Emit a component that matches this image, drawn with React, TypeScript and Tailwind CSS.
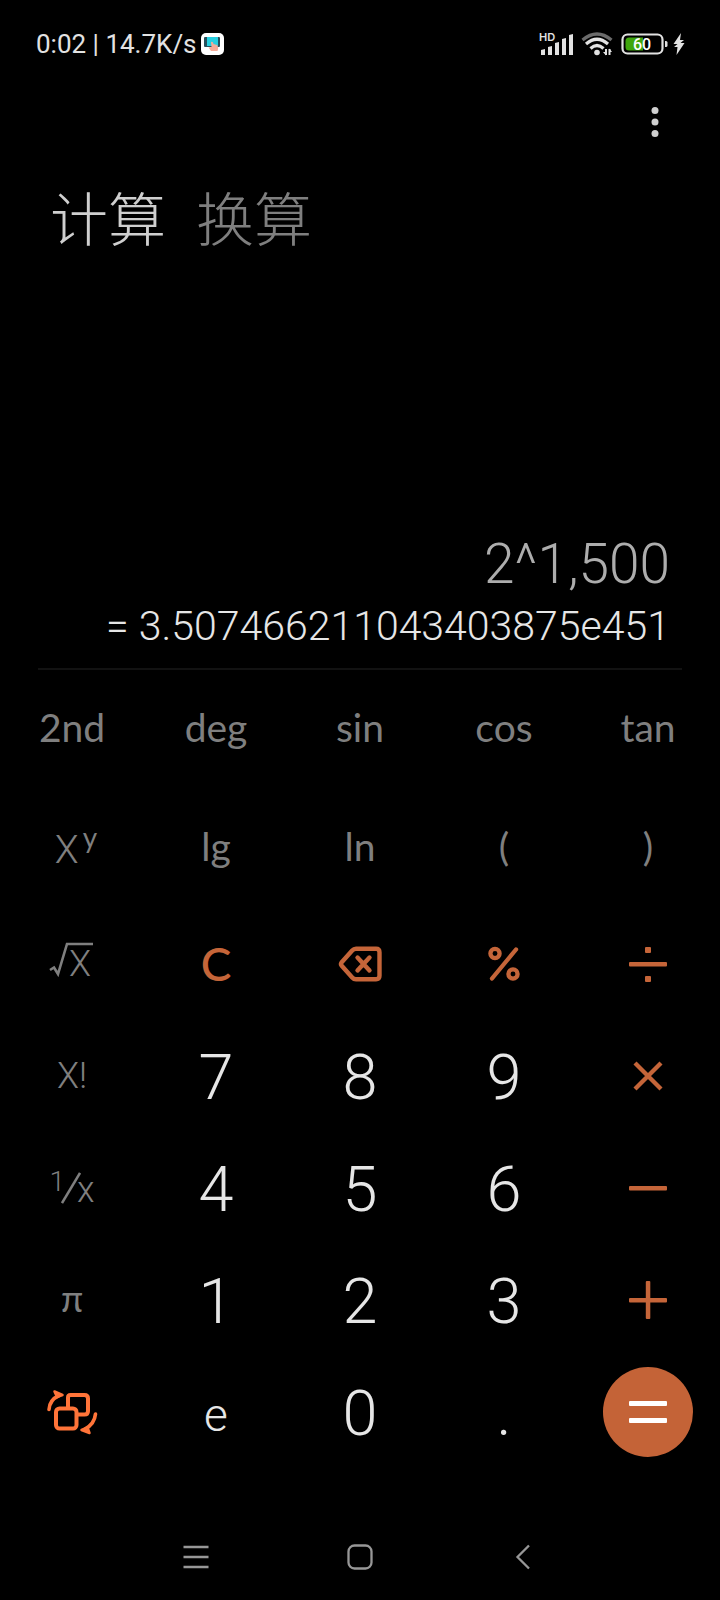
import { useState, type ReactNode } from "react";

type Tone = "fn" | "digit" | "op";

interface Key {
  id: string;
  label?: string;
  face: ReactNode;
  tone: Tone;
}

const toneClass: Record<Tone, string> = {
  fn: "pb-1 text-[#7f7f7f]",
  digit: "pt-0.5 font-['Roboto',sans-serif] font-[350] text-[#e6e6e6]",
  op: "text-[#c56539]",
};

const SqrtFace = () => (
  <svg width="46" height="50" viewBox="-1 -4 46 50" fill="none" stroke="currentColor" strokeWidth="2.600">
    <path d="M0 29 L4 26.500 L8 33 L17 3 H43" />
    <text x="19" y="35" fontSize="36" fontWeight="350" fontFamily="Roboto, sans-serif" fill="currentColor" stroke="none">
      X
    </text>
  </svg>
);

const BackspaceIcon = () => (
  <svg width="44" height="36" viewBox="0 0 44 36" fill="none" stroke="currentColor" strokeWidth="4.400" strokeLinecap="round" strokeLinejoin="round">
    <path d="M18 2.700 H38 Q41.500 2.700 41.500 6.200 V29.800 Q41.500 33.300 38 33.300 H18 Q15.800 33.300 14.200 31.500 L3.500 19.500 Q2.400 18 3.500 16.500 L14.200 4.500 Q15.800 2.700 18 2.700 Z" />
    <path strokeWidth="4.400" d="M19.500 11.500 L31.500 24.500 M31.500 11.500 L19.500 24.500" />
  </svg>
);

const PercentIcon = () => (
  <svg width="32" height="36" viewBox="0 0 32 36" fill="none" stroke="currentColor" strokeWidth="4.300" strokeLinecap="round">
    <circle cx="7" cy="7.500" r="4.600" />
    <circle cx="25" cy="28" r="4.600" />
    <path d="M28 3.500 L4 32.500" />
  </svg>
);

const DivideIcon = () => (
  <svg width="38" height="38" viewBox="0 0 38 38" fill="currentColor">
    <rect x="0" y="17" width="38" height="4.500" rx="1" />
    <rect x="16" y="2" width="6" height="6" rx="1" />
    <rect x="16" y="31" width="6" height="6" rx="1" />
  </svg>
);

const TimesIcon = () => (
  <svg width="38" height="38" viewBox="0 0 38 38" stroke="currentColor" strokeWidth="4.300">
    <path d="M6 6 L32 32 M32 6 L6 32" />
  </svg>
);

const MinusIcon = () => (
  <svg width="38" height="38" viewBox="0 0 38 38" fill="currentColor">
    <rect x="0" y="17" width="38" height="4.500" rx="1" />
  </svg>
);

const PlusIcon = () => (
  <svg width="38" height="38" viewBox="0 0 38 38" fill="currentColor">
    <rect x="0" y="17" width="38" height="4.500" rx="1" />
    <rect x="16.800" y="0" width="4.500" height="38" rx="1" />
  </svg>
);

const EqualsIcon = () => (
  <svg width="38" height="38" viewBox="0 0 38 38" fill="#fff">
    <rect x="0" y="8" width="38" height="5" rx="1" />
    <rect x="0" y="25" width="38" height="5" rx="1" />
  </svg>
);

const SwitchIcon = () => (
  <svg width="52" height="46" viewBox="0 0 52 46" fill="none" stroke="#ff7439" strokeWidth="4" strokeLinecap="round" strokeLinejoin="round">
    <path d="M22 18 V8.500 Q22 6 24.500 6 H38.500 Q42 6 42 9.500 V22 Q42 25.500 38.500 25.500 H32" />
    <rect x="10" y="19.500" width="20.500" height="20" rx="3.500" />
    <path strokeWidth="3.600" d="M3 20.500 Q3.500 11 13 6.500" />
    <path strokeWidth="2.500" fill="#ff7439" d="M8.500 2.500 L16.500 6 L11 8 Z" />
    <path strokeWidth="3.600" d="M49.500 25 Q48.500 35 39 40" />
    <path strokeWidth="2.500" fill="#ff7439" d="M43.500 44 L35.500 41 L41.500 38.500 Z" />
  </svg>
);

const keys: Key[] = [
  { id: "2nd", face: <span className="text-[39px]">2nd</span>, tone: "fn" },
  { id: "deg", face: <span className="text-[39px]">deg</span>, tone: "fn" },
  { id: "sin", face: <span className="text-[39px]">sin</span>, tone: "fn" },
  { id: "cos", face: <span className="text-[39px]">cos</span>, tone: "fn" },
  { id: "tan", face: <span className="text-[39px]">tan</span>, tone: "fn" },
  {
    id: "pow",
    label: "x to the power y",
    face: (
      <span className="flex items-start gap-1 pl-2">
        <span className="pt-2 font-['Roboto',sans-serif] text-[39px] font-[350]">X</span>
        <span className="text-[28px]">y</span>
      </span>
    ),
    tone: "fn",
  },
  { id: "lg", face: <span className="text-[39px]">lg</span>, tone: "fn" },
  { id: "ln", face: <span className="text-[39px]">ln</span>, tone: "fn" },
  { id: "(", face: <span className="text-[39px]">(</span>, tone: "fn" },
  { id: ")", face: <span className="text-[39px]">)</span>, tone: "fn" },
  { id: "sqrt", label: "square root", face: <SqrtFace />, tone: "fn" },
  { id: "C", face: <span className="text-[46px] font-medium">C</span>, tone: "op" },
  { id: "del", label: "delete", face: <BackspaceIcon />, tone: "op" },
  { id: "percent", label: "percent", face: <PercentIcon />, tone: "op" },
  { id: "divide", label: "divide", face: <DivideIcon />, tone: "op" },
  { id: "fact", label: "factorial", face: <span className="pt-1 font-['Roboto',sans-serif] text-[36px] font-[350]">X!</span>, tone: "fn" },
  { id: "7", face: <span className="text-[63px]">7</span>, tone: "digit" },
  { id: "8", face: <span className="text-[63px]">8</span>, tone: "digit" },
  { id: "9", face: <span className="text-[63px]">9</span>, tone: "digit" },
  { id: "times", label: "multiply", face: <TimesIcon />, tone: "op" },
  {
    id: "inv",
    label: "one over x",
    face: (
      <span className="flex items-center pt-1 font-['Roboto',sans-serif] font-[350]">
        <span className="pb-3 text-[28px]">1</span>
        <svg className="-ml-1" width="20" height="32" viewBox="0 0 20 32" stroke="currentColor" strokeWidth="2.500">
          <path d="M1 31 L19 1" />
        </svg>
        <span className="-ml-1 pt-1 text-[36px]">x</span>
      </span>
    ),
    tone: "fn",
  },
  { id: "4", face: <span className="text-[63px]">4</span>, tone: "digit" },
  { id: "5", face: <span className="text-[63px]">5</span>, tone: "digit" },
  { id: "6", face: <span className="text-[63px]">6</span>, tone: "digit" },
  { id: "minus", label: "minus", face: <MinusIcon />, tone: "op" },
  { id: "pi", face: <span className="text-[36px]">π</span>, tone: "fn" },
  { id: "1", face: <span className="text-[63px]">1</span>, tone: "digit" },
  { id: "2", face: <span className="text-[63px]">2</span>, tone: "digit" },
  { id: "3", face: <span className="text-[63px]">3</span>, tone: "digit" },
  { id: "plus", label: "plus", face: <PlusIcon />, tone: "op" },
  { id: "switch", label: "switch layout", face: <SwitchIcon />, tone: "op" },
  { id: "e", face: <span className="pt-1 text-[46px]">e</span>, tone: "digit" },
  { id: "0", face: <span className="text-[63px]">0</span>, tone: "digit" },
  { id: ".", face: <span className="text-[63px]">.</span>, tone: "digit" },
  {
    id: "equals",
    label: "equals",
    face: (
      <span className="flex size-[90px] items-center justify-center rounded-full bg-[#c46337]">
        <EqualsIcon />
      </span>
    ),
    tone: "op",
  },
];

function StatusBar() {
  return (
    <div className="flex h-[88px] items-center justify-between pr-[35px] pl-9 text-[#e2e2e2]">
      <div className="flex items-center gap-1">
        <span className="font-['Roboto',sans-serif] text-[26px]">0:02 | 14.7K/s</span>
        <svg width="23" height="22" viewBox="0 0 23 22">
          <rect width="23" height="22" rx="5" fill="#fff" />
          <rect x="3" y="4" width="16" height="10" rx="1" fill="#27505c" />
          <rect x="6" y="4" width="11" height="9" fill="#27cfe0" />
          <path d="M10 9 Q12 8 12.500 11 L16 12 Q18 14 16.500 18 H10 L7.500 14.500 L10.500 14 Z" fill="#f6ab98" />
        </svg>
      </div>
      <div className="flex items-center">
        <svg width="34" height="32" viewBox="0 -4 34 32" fill="currentColor">
          <text x="0" y="9" fontSize="11" fontWeight="600" fontFamily="Inter, sans-serif">
            HD
          </text>
          <path d="M2 18 L6 17 V23 H2 Z M9 15 L13 14 V23 H9 Z M16 11 L20 10 V23 H16 Z M23 7 L27 6 V23 H23 Z M30 3 L34 2 V23 H30 Z" />
        </svg>
        <svg className="ml-2" width="32" height="24" viewBox="0 0 32 24" fill="none" stroke="currentColor" strokeWidth="3.200">
          <path d="M1.500 8 Q16 -4 30.500 8" stroke="#6b6b6b" />
          <path d="M5 12 Q16 2.500 27 12" />
          <path d="M9.500 16.500 Q16 10.500 22.500 16.500" />
          <circle cx="16" cy="20.500" r="2.800" fill="currentColor" stroke="none" />
          <path strokeWidth="2" d="M25 17 V23 M28.500 17 V23" />
          <path d="M22 20 L25 23.500 V20 Z M28.500 16.500 L31 20 H28.500 Z" fill="currentColor" stroke="none" />
        </svg>
        <svg className="ml-2" width="48" height="22" viewBox="0 0 48 22">
          <rect x="1.500" y="1.500" width="40" height="19" rx="5" fill="none" stroke="currentColor" strokeWidth="2.200" />
          <path d="M8 4.500 H22 V17.500 H8 Q4.500 17.500 4.500 14 V8 Q4.500 4.500 8 4.500 Z" fill="#3fa60c" />
          <path d="M44 8 H45 Q46.500 8 46.500 9.500 V12.500 Q46.500 14 45 14 H44 Z" fill="currentColor" />
          <text x="21" y="17" textAnchor="middle" fontSize="16" fontWeight="500" fontFamily="Roboto, sans-serif" fill="#fff">
            60
          </text>
        </svg>
        <svg className="ml-1" width="12" height="22" viewBox="0 0 12 22" fill="currentColor">
          <path d="M8 0 L0.500 11 H4.500 L1 14 H4.500 L3.500 22 L11.500 10 H7.500 L11 7 H7 Z" />
        </svg>
      </div>
    </div>
  );
}

export default function App() {
  const [tab, setTab] = useState("calc");

  return (
    <div className="flex min-h-screen flex-col bg-black font-['Lato','Noto_Sans_CJK_SC',sans-serif] leading-none">
      <StatusBar />

      <div className="flex justify-end pr-11">
        <button aria-label="more" className="flex h-[68px] w-[43px] items-center justify-center text-[#d0d0d0]">
          <svg width="8" height="32" viewBox="0 0 8 32" fill="currentColor">
            <circle cx="4" cy="4.500" r="3.500" />
            <circle cx="4" cy="16" r="3.500" />
            <circle cx="4" cy="27.500" r="3.500" />
          </svg>
        </button>
      </div>

      <nav className="flex gap-[30px] pt-7 pl-[50px] font-['Noto_Sans_CJK_SC',sans-serif] text-[58px] leading-[64px] font-light">
        <button onClick={() => setTab("calc")} className={tab === "calc" ? "text-[#cfcfcf]" : "text-[#7f7f7f]"}>
          计算
        </button>
        <button onClick={() => setTab("convert")} className={tab === "convert" ? "text-[#cfcfcf]" : "text-[#7f7f7f]"}>
          换算
        </button>
      </nav>

      <div className="mx-[38px] flex flex-1 flex-col justify-end border-b-2 border-[#121212] pr-3 pb-3 font-['Roboto',sans-serif] font-[350] text-right">
        <p className="text-[55px] leading-[64px] text-[#adadad]">2^1,500</p>
        <p className="text-[41px] leading-[60px] text-[#e6e6e6]">= 3.507466211043403875e451</p>
      </div>

      <div className="grid grid-cols-5 grid-rows-[118px_120px_repeat(5,112px)]">
        {keys.map((key) => (
          <button key={key.id} aria-label={key.label} className={`flex items-center justify-center ${toneClass[key.tone]}`}>
            {key.face}
          </button>
        ))}
      </div>

      <div className="mt-[46px] flex h-[86px] items-center justify-center gap-[138px] text-[#979797]">
        <button aria-label="recent apps">
          <svg width="26" height="26" viewBox="0 0 26 26" stroke="currentColor" strokeWidth="2.300">
            <path d="M0.500 3 H25.500 M0.500 13 H25.500 M0.500 23 H25.500" />
          </svg>
        </button>
        <button aria-label="home">
          <svg width="26" height="26" viewBox="0 0 26 26" fill="none" stroke="currentColor" strokeWidth="2.300">
            <rect x="1.500" y="1.500" width="23" height="23" rx="6" />
          </svg>
        </button>
        <button aria-label="back">
          <svg width="26" height="26" viewBox="0 0 26 26" fill="none" stroke="currentColor" strokeWidth="2.300">
            <path d="M18 1.500 L6.500 13 L18 24.500" />
          </svg>
        </button>
      </div>
    </div>
  );
}
